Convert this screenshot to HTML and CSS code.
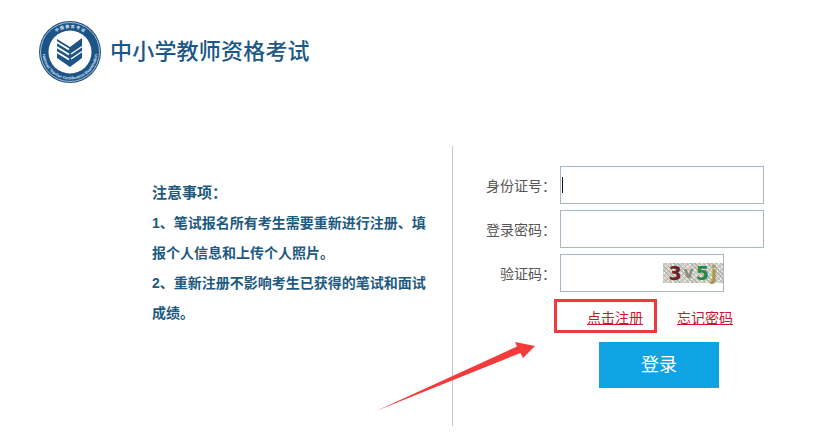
FILE: index.html
```html
<!DOCTYPE html>
<html lang="zh-CN">

<head>
    <meta charset="UTF-8">
    <meta name="viewport" content="width=device-width, initial-scale=1.0">
    <title>中小学教师资格考试</title>
    <link rel="stylesheet" href="styles.css">
</head>

<body>
    <div class="header">
        <svg class="logo" width="64" height="64" viewBox="0 0 64 64">
            <defs>
                <path id="ring-top" d="M8 32a24 24 0 0 1 48 0"></path>
                <path id="ring-bottom" d="M4.500 32a27.500 27.500 0 0 0 55 0"></path>
            </defs>
            <circle cx="32" cy="32" r="31" fill="#1d5488"></circle>
            <circle cx="32" cy="32" r="29.500" fill="none" stroke="#fff" stroke-width="0.600"></circle>
            <circle cx="32" cy="32" r="21.500" fill="#fff"></circle>
            <text class="logo-text"><textPath href="#ring-top" startOffset="50%" text-anchor="middle">中 国 教 育 考 试</textPath></text>
            <text class="logo-text"><textPath href="#ring-bottom" startOffset="50%" text-anchor="middle">National Teacher Certification Examination</textPath></text>
            <path d="M19 19L32 27L44 18V38L32 47L19 38Z" fill="#1d5488"></path>
            <path d="M17 21L31 29.500M17 26L31 34.500M17 31L31 39.500" fill="none" stroke="#fff" stroke-width="2"></path>
            <path d="M33 34L44 26.500M33 39L44 31.500" fill="none" stroke="#fff" stroke-width="1.500"></path>
        </svg>
        <h1 class="site-title">中小学教师资格考试</h1>
    </div>

    <div class="main">
        <div class="notice">
            <h2>注意事项：</h2>
            <p>1、笔试报名所有考生需要重新进行注册、填报个人信息和上传个人照片。</p>
            <p>2、重新注册不影响考生已获得的笔试和面试成绩。</p>
        </div>

        <form class="login-form">
            <div class="form-row">
                <label class="form-label">身份证号：</label>
                <div class="input-wrap">
                    <input type="text" class="form-input">
                    <span class="caret"></span>
                </div>
            </div>
            <div class="form-row">
                <label class="form-label">登录密码：</label>
                <div class="input-wrap">
                    <input type="password" class="form-input">
                </div>
            </div>
            <div class="form-row">
                <label class="form-label">验证码：</label>
                <div class="input-wrap">
                    <input type="text" class="form-input form-input-short">
                    <span class="captcha"><span class="c-red">3</span><span class="c-grey">v</span><span class="c-green">5</span><span class="c-olive">j</span></span>
                </div>
            </div>
            <div class="link-row">
                <span class="mark-box"><a href="#" class="form-link">点击注册</a></span>
                <a href="#" class="form-link">忘记密码</a>
            </div>
            <a href="#" class="login-button">登录</a>
        </form>
    </div>

    <!-- annotation drawn over the page -->
    <svg class="arrow" width="816" height="443" viewBox="0 0 816 443">
        <path d="M376 411L517 346.500L515 342L535 346L523 358L520.500 353Z" fill="#f23c3c"></path>
    </svg>
</body>

</html>
```

FILE: styles.css
```css
body {
    font-family: "Liberation Sans", "Noto Sans CJK SC", sans-serif;
    margin: 0;
    padding: 0;
    background-color: #fff;
    overflow: hidden;
}

.header {
    display: flex;
    align-items: center;
    height: 64px;
    padding: 20px 0 0 38px;
}

.logo-text {
    font-family: "Liberation Sans", "Noto Sans CJK SC", sans-serif;
    font-size: 4px;
    font-weight: bold;
    fill: #dfe8f2;
}

.site-title {
    margin: 0 0 6px 8px;
    font-size: 22px;
    font-weight: 500;
    letter-spacing: 0.2px;
    color: #1b5887;
}

.main {
    display: flex;
    margin-top: 62px;
}

.notice {
    width: 280px;
    padding: 32px 20px 0 152px;
    color: #1e5a80;
    font-weight: bold;
    font-size: 14px;
    line-height: 30px;
}

.notice h2 {
    margin: 0;
    font-size: 15px;
}

.notice p {
    margin: 0;
}

.login-form {
    width: 340px;
    height: 260px;
    padding-top: 20px;
    border-left: 1px solid #c8c8c8;
}

.form-row {
    display: flex;
    align-items: center;
    margin-bottom: 6px;
}

.form-label {
    width: 103px;
    margin-right: 4px;
    text-align: right;
    font-size: 14px;
    color: #555;
}

.input-wrap {
    position: relative;
    display: flex;
}

.form-input {
    box-sizing: border-box;
    width: 204px;
    height: 38px;
    padding: 0 4px;
    border: 1px solid #a9b8c8;
    border-radius: 0;
    outline: none;
    background-color: #fff;
}

.form-input-short {
    width: 164px;
}

.caret {
    position: absolute;
    left: 2px;
    top: 11px;
    width: 1px;
    height: 16px;
    background-color: #111;
}

.captcha {
    position: absolute;
    left: 103px;
    top: 9px;
    display: flex;
    justify-content: center;
    gap: 2px;
    width: 60px;
    height: 20px;
    background-color: #cfcfc8;
    background-image: repeating-linear-gradient(45deg, #b5b5ae 0 1px, transparent 1px 3px), repeating-linear-gradient(-45deg, #eeeeea 0 1px, transparent 1px 4px);
    font-family: "DejaVu Sans", sans-serif;
    font-size: 19px;
    font-weight: bold;
    line-height: 20px;
}

.c-red {
    color: #6e1f24;
}

.c-grey {
    color: #8a8a78;
    font-size: 15px;
}

.c-green {
    color: #2a8a45;
}

.c-olive {
    color: #a89a4a;
}

.link-row {
    display: flex;
    align-items: baseline;
    gap: 20px;
    margin: 7px 0 0 101px;
}

.mark-box {
    padding: 4px 11px 0 30px;
    border: 3px solid #ee3a3a;
    line-height: 23px;
}

.form-link {
    font-size: 14px;
    color: #c9162d;
}

.login-button {
    display: block;
    width: 120px;
    height: 46px;
    margin: 9px 0 0 146px;
    background-color: #0fa3e4;
    color: #fff;
    font-size: 18px;
    line-height: 46px;
    text-align: center;
    text-decoration: none;
}

.arrow {
    position: absolute;
    left: 0;
    top: 0;
    pointer-events: none;
}
```
